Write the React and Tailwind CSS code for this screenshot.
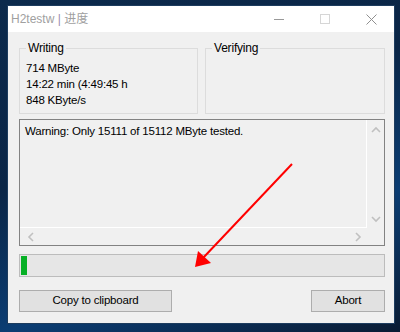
import React from "react";

const UI_FONT = { fontFamily: '"Liberation Sans", "Noto Sans CJK SC", sans-serif' };

function GroupBox({ title, children, className = "" }) {
  return (
    <fieldset className={`border border-[#dcdcdc] h-[73px] ${className}`}>
      <legend className="ml-[6px] px-[2px] text-[12px] leading-[14px] text-[#000]">{title}</legend>
      <div className="pl-[6px] pt-[5px] text-[11.5px] leading-[16px] text-black">{children}</div>
    </fieldset>
  );
}

function Chevron({ dir }) {
  const paths = {
    up: "M1 6 L5 2 L9 6",
    down: "M1 2 L5 6 L9 2",
    left: "M6 1 L2 5 L6 9",
    right: "M2 1 L6 5 L2 9",
  };
  const vertical = dir === "up" || dir === "down";
  return (
    <svg width={vertical ? 10 : 8} height={vertical ? 8 : 10} viewBox={vertical ? "0 0 10 8" : "0 0 8 10"}>
      <path d={paths[dir]} fill="none" stroke="#c0c0c0" strokeWidth="1.6" />
    </svg>
  );
}

function LogBox() {
  return (
    <div className="mt-[5px] h-[127px] border border-[#828282] bg-[#f0f0f0] flex flex-col">
      <div className="flex flex-1 min-h-0">
        <div className="flex-1 border-r border-b border-white pl-[5px] pt-[3px] text-[11.5px] leading-[16px] text-black">
          Warning: Only 15111 of 15112 MByte tested.
        </div>
        <div className="w-[17px] flex flex-col items-center justify-between pt-[6px] pb-[5px]">
          <Chevron dir="up" />
          <Chevron dir="down" />
        </div>
      </div>
      <div className="h-[17px] flex">
        <div className="flex-1 flex items-center justify-between pl-[7px] pr-[5px]">
          <Chevron dir="left" />
          <Chevron dir="right" />
        </div>
        <div className="w-[17px]" />
      </div>
    </div>
  );
}

function WinButton({ children, className = "" }) {
  return (
    <button className={`h-[22px] border border-[#adadad] bg-[#e1e1e1] text-[11.5px] text-black ${className}`}>
      {children}
    </button>
  );
}

export default function App() {
  return (
    <div
      className="w-[400px] h-[332px] overflow-hidden relative bg-[linear-gradient(160deg,#0c2a4c_0%,#0a2546_40%,#0b3d73_70%,#0a1b33_100%)] pl-[7px] pt-[5px] tracking-[-0.2px]"
      style={UI_FONT}
    >
      <div className="w-[388px] h-[319px] bg-[#f0f0f0] border border-[#1d3c5e] flex flex-col">
        <div className="h-[26px] bg-white flex items-center">
          <span className="ml-[3px] text-[12px] text-[#a0a0a0] tracking-normal">
            H2testw <span className="text-[#9a8fb0]">|</span> 进度
          </span>
          <div className="ml-auto flex items-center h-full">
            <div className="w-[46px] flex justify-center">
              <div className="w-[10px] h-px bg-[#999999]" />
            </div>
            <div className="w-[46px] flex justify-center">
              <div className="w-[10px] h-[10px] border border-[#d6d6d6]" />
            </div>
            <div className="w-[46px] flex justify-center">
              <svg width="11" height="11" viewBox="0 0 11 11">
                <path d="M0.5 0.5 L10.5 10.5 M10.5 0.5 L0.5 10.5" stroke="#8f8f8f" strokeWidth="1" fill="none" />
              </svg>
            </div>
          </div>
        </div>

        <div className="flex-1 pl-[11px] pr-[9px] pt-[9px] flex flex-col">
          <div className="flex gap-[7px]">
            <GroupBox title="Writing" className="w-[179px]">
              <div>714 MByte</div>
              <div>14:22 min (4:49:45 h</div>
              <div>848 KByte/s</div>
            </GroupBox>
            <GroupBox title="Verifying" className="w-[180px]" />
          </div>

          <LogBox />

          <div className="mt-[8px] h-[23px] border border-[#bcbcbc] bg-[#e6e6e6] p-px">
            <div className="h-full w-[6px] bg-[#06b025]" />
          </div>

          <div className="mt-[13px] flex justify-between">
            <WinButton className="w-[153px]">Copy to clipboard</WinButton>
            <WinButton className="w-[74px]">Abort</WinButton>
          </div>
        </div>
      </div>

      <svg className="absolute left-0 top-0 pointer-events-none" width="400" height="332" viewBox="0 0 400 332">
        <line x1="292" y1="164" x2="203" y2="258" stroke="#ff0000" strokeWidth="2" />
        <polygon points="195,267 198,251 211,263" fill="#ff0000" />
      </svg>
    </div>
  );
}
